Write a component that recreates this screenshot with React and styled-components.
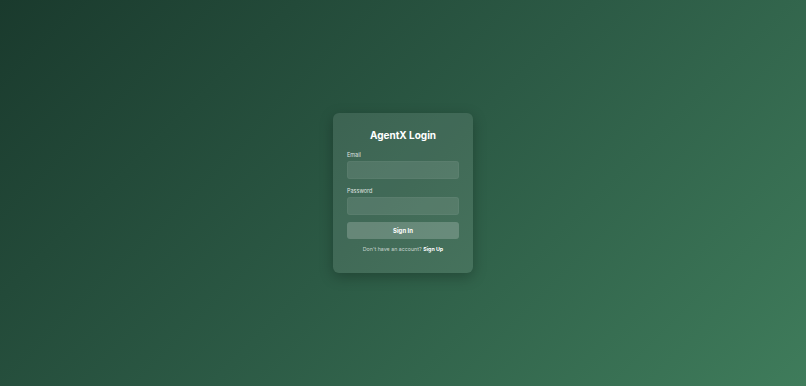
import React from 'react';
import styled, { createGlobalStyle } from 'styled-components';

const GlobalStyle = createGlobalStyle`
  html, body {
    margin: 0;
    padding: 0;
    height: 100%;
  }
  body {
    font-family: Inter, "Noto Sans", sans-serif;
  }
`;

const Page = styled.div`
  width: 100vw;
  height: 100vh;
  display: flex;
  align-items: center;
  justify-content: center;
  background: linear-gradient(135deg, #1a3a2d 0%, #2c5a45 50%, #3f7c5b 100%);
`;

const Card = styled.div`
  width: 140px;
  box-sizing: border-box;
  padding: 14px 14px 20px;
  border-radius: 6px;
  background: rgba(255, 255, 255, 0.1);
  box-shadow: 0 4px 14px rgba(0, 0, 0, 0.25);
  display: flex;
  flex-direction: column;
`;

const Title = styled.h1`
  margin: 0 0 8px;
  font-size: 10px;
  line-height: 16px;
  font-weight: 700;
  color: #ffffff;
  text-align: center;
`;

const Label = styled.label`
  display: block;
  font-size: 5.5px;
  line-height: 8px;
  color: rgba(255, 255, 255, 0.85);
  margin-bottom: 2px;
`;

const Field = styled.div`
  margin-bottom: ${(props) => props.gap}px;
`;

const Input = styled.input`
  display: block;
  width: 100%;
  height: 18px;
  box-sizing: border-box;
  border: 1px solid rgba(255, 255, 255, 0.04);
  border-radius: 3px;
  background: rgba(255, 255, 255, 0.1);
  outline: none;
  padding: 0 5px;
  color: #fff;
  font-family: inherit;
`;

const Button = styled.button`
  height: 17px;
  width: 100%;
  border: none;
  border-radius: 3px;
  background: rgba(255, 255, 255, 0.2);
  color: #fff;
  font-family: inherit;
  font-size: 6px;
  font-weight: 700;
  cursor: pointer;
  margin-bottom: 6px;
`;

const Footer = styled.p`
  margin: 0;
  font-size: 5.3px;
  line-height: 8px;
  text-align: center;
  color: rgba(255, 255, 255, 0.7);
`;

const Link = styled.a`
  color: #fff;
  font-weight: 700;
  text-decoration: none;
`;

export default function App() {
  return (
    <>
      <GlobalStyle />
      <Page>
        <Card>
          <Title>AgentX Login</Title>
          <Field gap={8}>
            <Label>Email</Label>
            <Input type="email" />
          </Field>
          <Field gap={7}>
            <Label>Password</Label>
            <Input type="password" />
          </Field>
          <Button>Sign In</Button>
          <Footer>
            Don't have an account? <Link href="#">Sign Up</Link>
          </Footer>
        </Card>
      </Page>
    </>
  );
}
